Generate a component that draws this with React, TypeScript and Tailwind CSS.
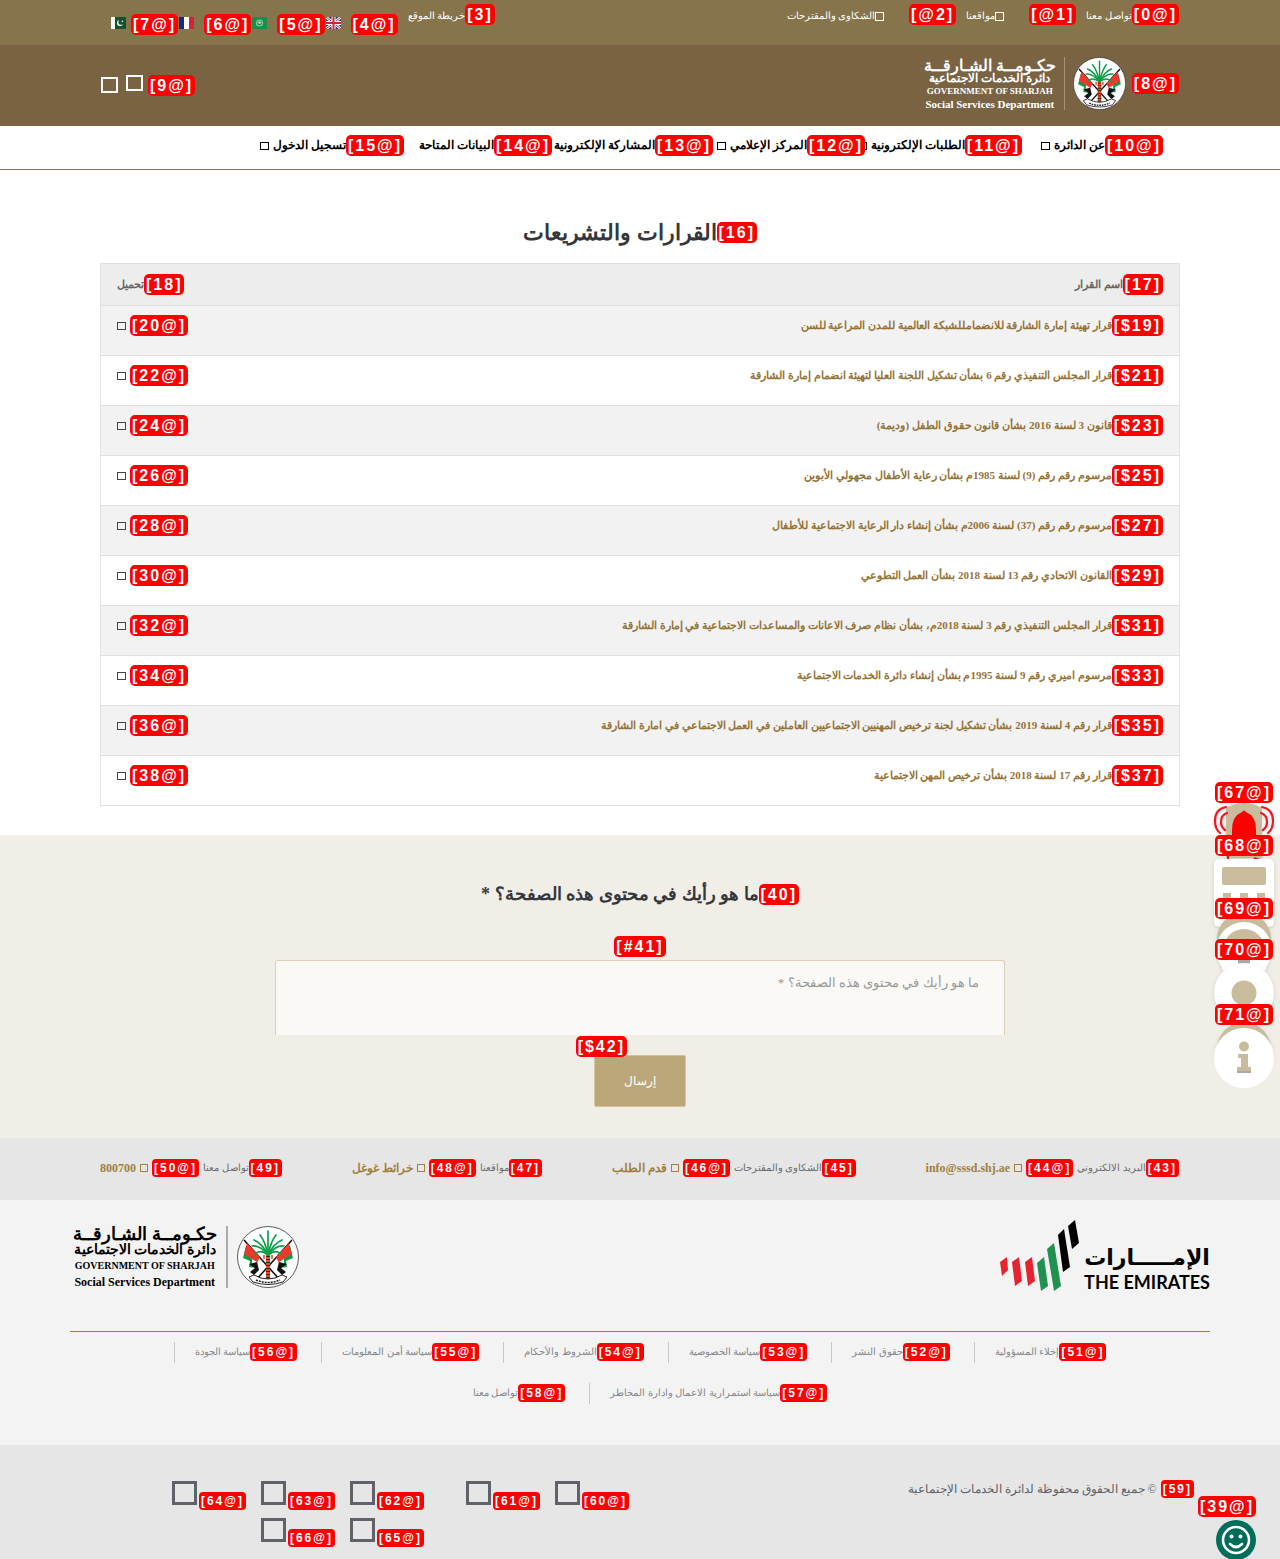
import type { ReactNode } from "react";

function Tag({ children, small = false, ltr = false }: { children: ReactNode; small?: boolean; ltr?: boolean }) {
  return (
    <span
      dir={ltr ? "ltr" : "rtl"}
      className={
        "relative inline-block shrink-0 whitespace-nowrap bg-[#ff0000] px-[2px] font-['Liberation_Sans',sans-serif] font-bold tracking-[2px] text-white " +
        (small ? "rounded-[4px] text-[12px] leading-[18px]" : "rounded-[5px] text-[16px] leading-[21px]")
      }
    >
      {children}
    </span>
  );
}

function Box({ className = "" }: { className?: string }) {
  return <span aria-hidden="true" className={"inline-block shrink-0 border-current " + className} />;
}

function Emblem({ className }: { className: string }) {
  return (
    <svg viewBox="0 0 62 62" className={className} aria-hidden="true">
      <circle cx="31" cy="31" r="30.5" fill="#fff" stroke="#333" strokeWidth="0.8" />
      <path d="M7 14 L43 54 M55 14 L19 54" stroke="#111" strokeWidth="1.6" />
      <path d="M9 20 L18 29 L20 42 L12 41 L13 35 L6 32 Z" fill="#0a9d48" />
      <path d="M53 20 L44 29 L42 42 L50 41 L49 35 L56 32 Z" fill="#0a9d48" />
      <path d="M10 17 L23 31 L20 37 L15 33 L7 28 Z" fill="#ea3a2c" />
      <path d="M52 17 L39 31 L42 37 L47 33 L55 28 Z" fill="#ea3a2c" />
      <path d="M15 33 L20 36 L21 40 L15 38 Z M47 33 L42 36 L41 40 L47 38 Z" fill="#fff" />
      <path d="M12 38 L20 36 L22 44 L17 49 L13 46 L18 42 Z M50 38 L42 36 L40 44 L45 49 L49 46 L44 42 Z" fill="#111" />
      <path d="M31 29 V53" stroke="#d9532c" strokeWidth="4" />
      <path d="M31 30 V53" stroke="#3b1c10" strokeWidth="4.2" strokeDasharray="1 2" />
      <g fill="none" stroke="#0a9d48" strokeWidth="1.7" strokeLinecap="round">
        <path d="M31 29 V5" />
        <path d="M31 29 Q28 15 23 9 M31 29 Q34 15 39 9" />
        <path d="M31 29 Q25 17 17 14 M31 29 Q37 17 45 14" />
        <path d="M31 29 Q23 19 15 20 M31 29 Q39 19 47 20" />
        <path d="M31 29 Q23 23 18 28 M31 29 Q39 23 44 28" />
      </g>
      <path d="M27 29 V33 M35 29 V33" stroke="#ea6a4c" strokeWidth="2" />
      <path d="M12 51 L17 49 Q31 57 45 49 L50 51 L46 56 Q31 61 16 56 Z" fill="#fff" stroke="#222" strokeWidth="1" />
      <path d="M19 54 Q31 59 43 54" fill="none" stroke="#222" strokeWidth="1.6" strokeDasharray="2 1" />
    </svg>
  );
}

function DepartmentLogo({ large = false }: { large?: boolean }) {
  return (
    <span className={"flex items-center " + (large ? "gap-[9px] text-black" : "gap-[8px] text-white")}>
      <Emblem className={large ? "size-[62px]" : "size-[53px]"} />
      <span className={large ? "h-[62px] w-[2px] bg-[#aaa]" : "h-[53px] w-px bg-[#a3917a]"} />
      <span
        className={
          "flex flex-col items-center whitespace-nowrap pt-[3px] font-bold " +
          (large ? "text-[12px] leading-[16px]" : "text-[11px] leading-[13px]")
        }
      >
        <span className={large ? "text-[18px]" : "text-[16px]"}>حكـومــة الشـارقــة</span>
        <span className={large ? "text-[14px]" : "text-[12px]"}>دائرة الخدمات الاجتماعية</span>
        <span dir="ltr" className={large ? "text-[10px]" : "text-[9px]"}>GOVERNMENT OF SHARJAH</span>
        <span dir="ltr">Social Services Department</span>
      </span>
    </span>
  );
}

function EmiratesLogo() {
  return (
    <span className="flex items-end gap-[4px] text-black">
      <span className="flex flex-col items-center whitespace-nowrap font-bold">
        <span className="font-['DejaVu_Sans',sans-serif] text-[22px] leading-[28px]">الإمـــــارات</span>
        <span dir="ltr" className="font-['Lato',sans-serif] text-[18px] leading-[20px]">THE EMIRATES</span>
      </span>
      <svg viewBox="0 0 80 72" className="h-[72px] w-[80px]" aria-hidden="true">
        <g fill="#e6232e">
          <path d="M0 42 L7 37 L8 50 L2 56 Z" />
          <path d="M12 42 L19 37 L22 61 L15 66 Z" />
          <path d="M25 42 L32 37 L35 61 L28 66 Z" />
        </g>
        <g fill="#219150">
          <path d="M37 43 L44 37 L48 66 L41 71 Z" />
          <path d="M47 29 L54 23 L61 66 L54 71 Z" />
        </g>
        <g fill="#000">
          <path d="M58 15 L64 9 L70 47 L63 52 Z" />
          <path d="M68 6 L75 0 L79 23 L72 29 Z" />
        </g>
      </svg>
    </span>
  );
}

function Flag({ kind }: { kind: "uk" | "arab" | "fr" | "pk" }) {
  return (
    <svg viewBox="0 0 15 12" className="h-[12px] w-[15px]" aria-hidden="true">
      {kind === "uk" && (
        <>
          <rect width="15" height="12" fill="#2b3a80" />
          <path d="M0 0 L15 12 M15 0 L0 12" stroke="#fff" strokeWidth="2.6" />
          <path d="M0 0 L15 12 M15 0 L0 12" stroke="#d0243c" strokeWidth="1" />
          <path d="M7.5 0 V12 M0 6 H15" stroke="#fff" strokeWidth="4" />
          <path d="M7.5 0 V12 M0 6 H15" stroke="#d0243c" strokeWidth="2" />
        </>
      )}
      {kind === "arab" && (
        <>
          <rect width="15" height="12" fill="#1c8d4b" />
          <circle cx="7.5" cy="6" r="3" fill="none" stroke="#8fc9a0" strokeWidth="1.2" />
          <circle cx="7.5" cy="5.6" r="1.4" fill="#bfe0c8" />
        </>
      )}
      {kind === "fr" && (
        <>
          <rect width="5" height="12" fill="#1b2a80" />
          <rect x="5" width="5" height="12" fill="#fff" />
          <rect x="10" width="5" height="12" fill="#d0243c" />
        </>
      )}
      {kind === "pk" && (
        <>
          <rect width="15" height="12" fill="#14532d" />
          <rect width="4" height="12" fill="#fff" />
          <circle cx="9" cy="6" r="3" fill="#fff" />
          <circle cx="10" cy="5.2" r="2.6" fill="#14532d" />
          <circle cx="11.4" cy="4.2" r="0.8" fill="#fff" />
        </>
      )}
    </svg>
  );
}

const languages = [
  { tag: "[@4]", kind: "uk", label: "English", gap: "gap-[10px]" },
  { tag: "[@5]", kind: "arab", label: "العربية", gap: "gap-[10px]" },
  { tag: "[@6]", kind: "fr", label: "Français", gap: "gap-[10px]" },
  { tag: "[@7]", kind: "pk", label: "اردو", gap: "gap-[5px]" },
] as const;

const nav = [
  { tag: "[@10]", text: "عن الدائرة", box: true, width: "w-[141px]" },
  { tag: "[@11]", text: "الطلبات الإلكترونية", box: true, width: "w-[157px]" },
  { tag: "[@12]", text: "المركز الإعلامي", box: true, width: "w-[152px]" },
  { tag: "[@13]", text: "المشاركة الإلكترونية", box: true, width: "w-[161px]" },
  { tag: "[@14]", text: "البيانات المتاحة", box: false, width: "w-[148px]" },
  { tag: "[@15]", text: "تسجيل الدخول", box: true, width: "w-[148px]" },
];

const decisions = [
  { tag: "[$19]", download: "[@20]", text: "قرار تهيئة إمارة الشارقة للانضمامللشبكة العالمية للمدن المراعية للسن" },
  { tag: "[$21]", download: "[@22]", text: "قرار المجلس التنفيذي رقم 6 بشأن تشكيل اللجنة العليا لتهيئة انضمام إمارة الشارقة" },
  { tag: "[$23]", download: "[@24]", text: "قانون 3 لسنة 2016 بشأن قانون حقوق الطفل (وديمة)" },
  { tag: "[$25]", download: "[@26]", text: "مرسوم رقم رقم (9) لسنة 1985م بشأن رعاية الأطفال مجهولي الأبوين" },
  { tag: "[$27]", download: "[@28]", text: "مرسوم رقم رقم (37) لسنة 2006م بشأن إنشاء دار الرعاية الاجتماعية للأطفال" },
  { tag: "[$29]", download: "[@30]", text: "القانون الاتحادي رقم 13 لسنة 2018 بشأن العمل التطوعي" },
  { tag: "[$31]", download: "[@32]", text: "قرار المجلس التنفيذي رقم 3 لسنة 2018م، بشأن نظام صرف الاعانات والمساعدات الاجتماعية في إمارة الشارقة" },
  { tag: "[$33]", download: "[@34]", text: "مرسوم اميري رقم 9 لسنة 1995م بشأن إنشاء دائرة الخدمات الاجتماعية" },
  { tag: "[$35]", download: "[@36]", text: "قرار رقم 4 لسنة 2019 بشأن تشكيل لجنة ترخيص المهنيين الاجتماعيين العاملين في العمل الاجتماعي في امارة الشارقة" },
  { tag: "[$37]", download: "[@38]", text: "قرار رقم 17 لسنة 2018 بشأن ترخيص المهن الاجتماعية" },
];

const contacts = [
  { tag: "[43]", text: "البريد الالكتروني", linkTag: "[@44]", link: "info@sssd.shj.ae" },
  { tag: "[45]", text: "الشكاوى والمقترحات", linkTag: "[@46]", link: "قدم الطلب" },
  { tag: "[47]", text: "مواقعنا", linkTag: "[@48]", link: "خرائط غوغل" },
  { tag: "[49]", text: "تواصل معنا", linkTag: "[@50]", link: "800700" },
];

const footerLinks = [
  { tag: "[@51]", text: "إخلاء المسؤولية" },
  { tag: "[@52]", text: "حقوق النشر" },
  { tag: "[@53]", text: "سياسة الخصوصية" },
  { tag: "[@54]", text: "الشروط والأحكام" },
  { tag: "[@55]", text: "سياسة أمن المعلومات" },
  { tag: "[@56]", text: "سياسة الجودة" },
  { tag: "[@57]", text: "سياسة استمرارية الاعمال وادارة المخاطر" },
  { tag: "[@58]", text: "تواصل معنا" },
];

function SocialLink({ tag }: { tag: string }) {
  return (
    <a href="#" className="flex h-[37px] w-[89px] items-start text-[#5f6268]">
      <span className="pt-[12px] leading-none"><Tag small>{tag}</Tag></span>
      <Box className="mr-[2px] mt-px h-[24px] w-[25px] border-[3px]" />
    </a>
  );
}

function TopBar() {
  return (
    <div className="h-[45px] bg-[#87744a] text-[10px] leading-[24px] text-white">
      <div className="mx-auto flex max-w-[1080px] items-start justify-between px-px pt-[4px]">
        <div className="flex items-start gap-[10px]">
          <a href="#" className="flex items-start"><Tag>[@0]</Tag>تواصل معنا</a>
          <a href="#" className="flex items-start">
            <Tag ltr>[@1]</Tag>
            <Box className="mt-[8px] mr-[25px] size-[9px] border" />
            مواقعنا
          </a>
          <a href="#" className="flex items-start">
            <Tag ltr>[@2]</Tag>
            <Box className="mt-[8px] mr-[25px] size-[9px] border" />
            الشكاوى والمقترحات
          </a>
        </div>
        <div className="flex items-start gap-[10px] pl-[10px]">
          <a href="#" className="flex items-start"><Tag>[3]</Tag>خريطة الموقع</a>
          <div className="flex gap-px pt-[10px]">
            {languages.map((l) => (
              <a key={l.tag} href="#" aria-label={l.label} className={"flex h-[21px] " + l.gap}>
                <Tag>{l.tag}</Tag>
                <span className="flex items-start pt-[3px]"><Flag kind={l.kind} /></span>
              </a>
            ))}
          </div>
        </div>
      </div>
    </div>
  );
}

function SideWidgets() {
  return (
    <div className="absolute top-[782px] right-[6px] w-[60px] leading-none">
      <a href="#" className="relative block h-[53px] px-px">
        <svg viewBox="0 0 60 60" className="absolute top-[20px] right-0 size-[60px] overflow-visible drop-shadow" aria-hidden="true">
          <path d="M12 6 Q30 -4 48 6 V56 H12 Z" fill="#c8bc9c" />
          <path d="M18 54 V28 Q18 14 28 10 Q30 7 32 10 Q42 14 42 28 V54 Z" fill="#ff0000" />
          <path d="M14 54 V58 M40 56 L46 58" stroke="#e91c24" strokeWidth="2" />
          <g fill="none" stroke="#f01820" strokeWidth="2.2" strokeLinecap="round">
            <path d="M12 5 Q1 7 1 19 Q1 27 6 31 M13 11 Q7 13 7 20 Q7 25 11 28" />
            <path d="M48 5 Q59 7 59 19 Q59 27 54 31 M47 11 Q53 13 53 20 Q53 25 49 28" />
          </g>
        </svg>
        <Tag>[@67]</Tag>
      </a>
      <a href="#" className="relative block h-[63px] px-px">
        <svg viewBox="0 0 60 68" className="absolute top-[24px] right-0 h-[68px] w-[60px] overflow-visible drop-shadow" aria-hidden="true">
          <rect width="60" height="68" rx="5" fill="#fff" />
          <rect x="8" y="8" width="44" height="18" rx="2" fill="#c8bc9c" />
          <path d="M9 34 H17 V45 H9 Z M26 34 H34 V45 H26 Z M43 34 H51 V45 H43 Z" fill="#c8bc9c" />
        </svg>
        <Tag>[@68]</Tag>
      </a>
      <a href="#" className="relative block h-[41px] px-px">
        <svg viewBox="0 0 60 60" className="absolute top-[14px] right-0 size-[60px] overflow-visible drop-shadow" aria-hidden="true">
          <circle cx="30" cy="27" r="27" fill="#c8bc9c" />
          <circle cx="30" cy="38" r="28" fill="#fff" />
          <circle cx="30" cy="38" r="21" fill="#c8bc9c" />
          <path d="M8 45 H52 V58 Q30 72 8 58 Z" fill="#fff" />
          <path d="M24 45 H36 V56 H24 Z" fill="#aaa" />
        </svg>
        <Tag>[@69]</Tag>
      </a>
      <a href="#" className="relative block h-[65px] px-px">
        <svg viewBox="0 0 60 60" className="absolute top-[24px] right-0 size-[60px] overflow-visible drop-shadow" aria-hidden="true">
          <circle cx="30" cy="30" r="30" fill="#fff" />
          <circle cx="30" cy="30" r="12.5" fill="#c8bc9c" />
        </svg>
        <Tag>[@70]</Tag>
      </a>
      <a href="#" className="relative block h-[84px] px-px">
        <svg viewBox="0 0 60 84" className="absolute top-0 right-0 h-[84px] w-[60px] overflow-visible" aria-hidden="true">
          <circle cx="30" cy="45" r="27" fill="#c8bc9c" className="drop-shadow-md" />
          <circle cx="30" cy="54" r="30" fill="#fff" />
          <circle cx="30" cy="42.5" r="5" fill="#c8bc9c" />
          <path d="M23 65 H37 V69 H23 Z" fill="#aaa" />
          <path d="M24 50 H34 V63 H37 V67 H23 V63 H27 V54 H24 Z" fill="#c8bc9c" />
        </svg>
        <Tag>[@71]</Tag>
      </a>
    </div>
  );
}

export default function App() {
  return (
    <div dir="rtl" className="relative overflow-hidden bg-white font-['Liberation_Serif',serif] text-[#34373c]">
      <TopBar />
      <header className="h-[81px] bg-[#7a6342] text-white">
        <div className="mx-auto flex max-w-[1080px] justify-between px-px">
          <a href="#" className="flex items-center gap-[6px] pt-[11px]">
            <Tag>[@8]</Tag>
            <DepartmentLogo />
          </a>
          <div className="flex items-start pt-[30px]">
            <a href="#" className="flex items-start gap-[5px]" aria-label="بحث">
              <Tag>[@9]</Tag>
              <Box className="h-[16px] w-[17px] border-2" />
            </a>
            <a href="#" aria-label="القائمة" className="mr-[8px] flex pt-[2px]">
              <Box className="h-[16px] w-[17px] border-2" />
            </a>
          </div>
        </div>
      </header>

      <nav className="border-b border-[#87744a] text-[12px] leading-[21px] font-bold text-black">
        <ul className="mx-auto flex h-[43px] max-w-[1080px] px-[17px] pt-[9px]">
          {nav.map((n) => (
            <li key={n.tag} className={"relative shrink-0 " + n.width}>
              <a href="#" className="flex items-center whitespace-nowrap">
                <Tag>{n.tag}</Tag>
                {n.text}
                {n.box && <Box className="mr-[4px] h-[8px] w-[9px] border" />}
              </a>
            </li>
          ))}
        </ul>
      </nav>

      <main>
        <h1 className="flex h-[93px] items-center justify-center pt-[31px] text-[22px] font-bold">
          <Tag>[16]</Tag>
          <span>القرارات والتشريعات</span>
        </h1>
        <div className="mx-auto max-w-[1080px]">
          <table className="w-full border-collapse border border-[#e4e4e4] text-[11px] font-bold">
            <thead>
              <tr className="h-[42px] border border-[#dfe0e6] bg-[#ededed] text-[#666]">
                <th scope="col" className="px-4 text-start">
                  <span className="flex items-center leading-[21px]"><Tag>[17]</Tag>اسم القرار</span>
                </th>
                <th scope="col" className="px-4">
                  <span className="flex items-center justify-end leading-[21px]"><Tag>[18]</Tag>تحميل</span>
                </th>
              </tr>
            </thead>
            <tbody>
              {decisions.map((d) => (
                <tr key={d.tag} className="h-[50px] border-y border-[#dfe0e6] align-top odd:bg-[#f2f2f2]">
                  <td className="px-4 pt-[9px]">
                    <a href="#" className="flex items-center leading-[21px] text-[#967437]"><Tag>{d.tag}</Tag>{d.text}</a>
                  </td>
                  <td className="px-4 pt-[9px]">
                    <a href="#" aria-label="تحميل" className="flex items-center justify-end leading-[21px] text-[#444]">
                      <Tag>{d.download}</Tag>
                      <Box className="mr-[4px] h-[8px] w-[9px] border" />
                    </a>
                  </td>
                </tr>
              ))}
            </tbody>
          </table>
        </div>

        <section className="mt-[29px] h-[303px] bg-[#f1eee7]">
          <form className="mx-auto flex max-w-[730px] flex-col items-center" onSubmit={(e) => e.preventDefault()}>
            <label htmlFor="opinion" className="mt-[47px] flex items-center text-[18px] leading-[24px] font-bold">
              <Tag>[40]</Tag>
              <span>ما هو رأيك في محتوى هذه الصفحة؟ *</span>
            </label>
            <span className="mt-[30px] leading-none"><Tag>[#41]</Tag></span>
            <textarea
              id="opinion"
              placeholder="ما هو رأيك في محتوى هذه الصفحة؟ *"
              className="mt-[3px] block h-[75px] w-full resize-none rounded-t-[3px] border border-b-0 border-[#dccfb8] bg-[#faf9f5] px-[25px] pt-[12px] text-[13px] leading-[20px] placeholder:text-[#999]"
            />
            <div className="relative mt-[20px]">
              <button type="submit" className="h-[52px] w-[92px] rounded-[2px] border border-[#d3c19c] bg-[#bca77b] text-[12px] text-white">
                إرسال
              </button>
              <span className="absolute -top-[19px] right-[59px] leading-none"><Tag>[$42]</Tag></span>
            </div>
          </form>
        </section>
      </main>

      <footer>
        <div className="h-[62px] bg-[#e6e6e6]">
          <ul className="mx-auto flex max-w-[1080px] justify-between pt-[21px] pr-px leading-[18px] text-[#6b6b6b]">
            {contacts.map((c) => (
              <li key={c.tag} className="flex items-center gap-[4px]">
                <span className="flex text-[10px]"><Tag small>{c.tag}</Tag>{c.text}</span>
                <a href="#" className="flex items-center gap-[4px] text-[12px] font-bold text-[#a17f3e]">
                  <Tag small>{c.linkTag}</Tag>
                  <Box className="size-[8px] border" />
                  {c.link}
                </a>
              </li>
            ))}
          </ul>
        </div>
        <div className="h-[245px] bg-[#f3f3f3]">
          <div className="mx-auto max-w-[1140px]">
            <div className="flex h-[132px] items-start justify-between border-b border-[#9b7f46] pt-[20px]">
              <a href="#" aria-label="الإمارات"><EmiratesLogo /></a>
              <a href="#" className="pt-[3px] pl-[3px]"><DepartmentLogo large /></a>
            </div>
            <ul className="flex flex-wrap justify-center gap-x-[4px] gap-y-[20px] px-[76px] pt-[10px] pl-[96px] text-[10px] leading-[18px] text-[#85868c]">
              {footerLinks.map((f) => (
                <li key={f.tag} className="h-[21px] border-l border-[#c8c8c8] px-[20px] pt-px last:border-l-0">
                  <a href="#" className="flex"><Tag small>{f.tag}</Tag>{f.text}</a>
                </li>
              ))}
            </ul>
          </div>
        </div>
        <div className="bg-[#e6e6e6]">
          <div className="mx-auto flex h-[114px] max-w-[1108px] items-start justify-between pt-[35px]">
            <p className="flex items-center gap-[4px] text-[12px] leading-[18px] text-[#5f6268]">
              <Tag small>[59]</Tag>
              © جميع الحقوق محفوظة لدائرة الخدمات الإجتماعية
            </p>
            <div className="flex pl-[71px]">
              <div className="flex pl-[27px]">
                <SocialLink tag="[@60]" />
                <SocialLink tag="[@61]" />
              </div>
              <div className="flex w-[267px] flex-wrap">
                <SocialLink tag="[@62]" />
                <SocialLink tag="[@63]" />
                <SocialLink tag="[@64]" />
                <SocialLink tag="[@65]" />
                <SocialLink tag="[@66]" />
              </div>
            </div>
          </div>
        </div>
      </footer>

      <SideWidgets />
      <a href="#" aria-label="مؤشر السعادة" className="absolute right-[24px] bottom-[-1px] flex flex-col leading-none">
        <Tag>[@39]</Tag>
        <svg viewBox="0 0 40 40" className="mt-[3px] size-[40px]" aria-hidden="true">
          <circle cx="20" cy="20" r="20" fill="#006d5b" />
          <g fill="none" stroke="#fff" strokeWidth="2.6" strokeLinecap="round">
            <circle cx="20" cy="20" r="13" />
            <path d="M14 24 Q20 30 26 24" />
          </g>
          <circle cx="15.5" cy="16.5" r="2" fill="#fff" />
          <circle cx="24.5" cy="16.5" r="2" fill="#fff" />
        </svg>
      </a>
    </div>
  );
}
